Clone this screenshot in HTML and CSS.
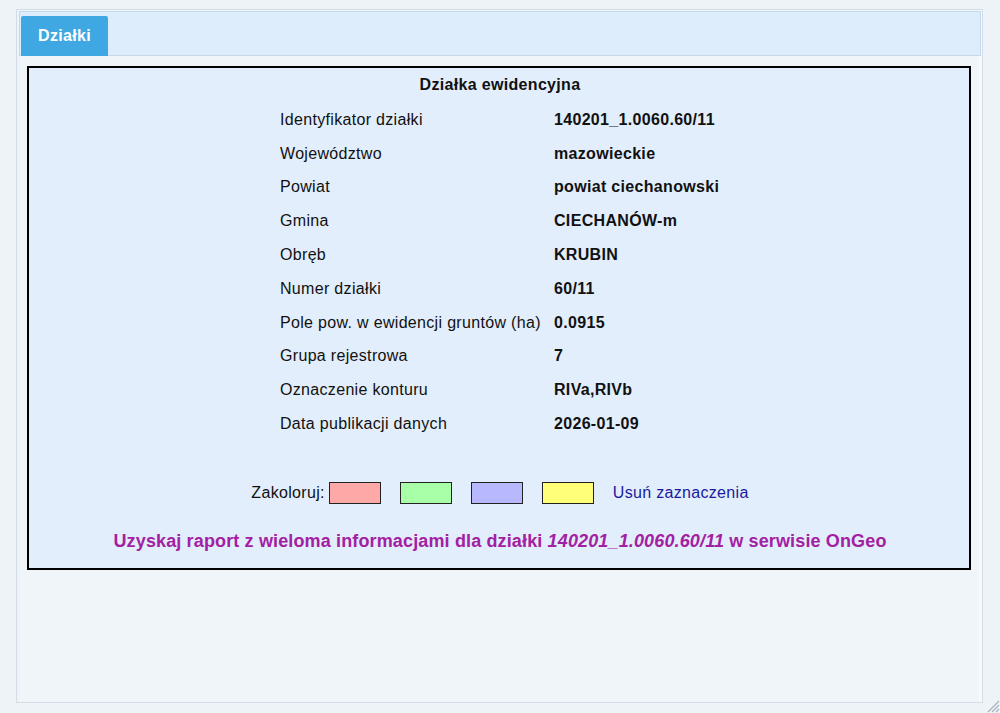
FILE: index.html
```html
<!DOCTYPE html>
<html lang="pl">
<head>
<meta charset="utf-8">
<title>Działki</title>
<link rel="stylesheet" href="styles.css">
</head>
<body>
<div class="panel">
  <div class="tabbar">
    <div class="tab">Działki</div>
  </div>
  <div class="content">
    <div class="box">
      <div class="title">Działka ewidencyjna</div>
      <div class="grid">
        <div class="lab">Identyfikator działki</div><div class="val">140201_1.0060.60/11</div>
        <div class="lab">Województwo</div><div class="val">mazowieckie</div>
        <div class="lab">Powiat</div><div class="val">powiat ciechanowski</div>
        <div class="lab">Gmina</div><div class="val">CIECHANÓW-m</div>
        <div class="lab">Obręb</div><div class="val">KRUBIN</div>
        <div class="lab">Numer działki</div><div class="val">60/11</div>
        <div class="lab">Pole pow. w ewidencji gruntów (ha)</div><div class="val">0.0915</div>
        <div class="lab">Grupa rejestrowa</div><div class="val">7</div>
        <div class="lab">Oznaczenie konturu</div><div class="val">RIVa,RIVb</div>
        <div class="lab">Data publikacji danych</div><div class="val">2026-01-09</div>
      </div>
      <div class="colors">
        <span class="clabel">Zakoloruj:</span>
        <span class="sw red"></span>
        <span class="sw green"></span>
        <span class="sw blue"></span>
        <span class="sw yellow"></span>
        <a class="clear">Usuń zaznaczenia</a>
      </div>
      <div class="report">Uzyskaj raport z wieloma informacjami dla działki <i>140201_1.0060.60/11</i> w serwisie OnGeo</div>
    </div>
  </div>
</div>
<svg class="grip" width="16" height="16" viewBox="0 0 16 16">
  <path d="M15 4 L4 15 M15 8 L8 15 M15 12 L12 15" stroke="#a9b4bf" stroke-width="1.3" fill="none"/>
</svg>
</body>
</html>
```
FILE: styles.css
```css
html, body {
  margin: 0;
  padding: 0;
  background: #eef3f8;
  font-family: "Liberation Sans", Arial, sans-serif;
  font-size: 16px;
  color: #111;
}
body {
  padding: 9px 0 0 16px;
  height: 713px;
  box-sizing: border-box;
  overflow: hidden;
}
.panel {
  width: 967px;
  height: 694px;
  box-sizing: border-box;
  border: 1px solid #d3dde7;
  background: #f0f5f9;
  padding: 1px 1px 0 2px;
  box-shadow: inset 3px 0 0 #eef3f8, inset -3px 0 0 #f7fafc;
}
.tabbar {
  height: 45px;
  box-sizing: border-box;
  border: 1px solid #c5d9ea;
  background: #deedfb;
  padding: 4px 0 0 1px;
  display: flex;
  align-items: flex-end;
}
.tab {
  width: 87px;
  height: 40px;
  box-sizing: border-box;
  margin-bottom: -1px;
  background: #3fa8e2;
  color: #fff;
  font-weight: bold;
  font-size: 16px;
  letter-spacing: 0.3px;
  display: flex;
  align-items: center;
  justify-content: center;
  border-radius: 2px 2px 0 0;
}
.content {
  padding: 10px 10px 0 8px;
}
.box {
  width: 944px;
  height: 504px;
  box-sizing: border-box;
  border: 2px solid #000;
  background: #e2eefc;
  padding-top: 7px;
  letter-spacing: 0.32px;
}
.title {
  text-align: center;
  font-weight: bold;
  line-height: 20px;
  margin-bottom: 8px;
  padding-left: 2px;
}
.grid {
  display: grid;
  grid-template-columns: 274px 170px;
  grid-auto-rows: 33.8px;
  justify-content: center;
  align-items: center;
  padding-left: 0;
}
.lab {
  padding-left: 3px;
  white-space: nowrap;
}
.val {
  font-weight: bold;
  padding-left: 3px;
  white-space: nowrap;
}
.colors {
  margin-top: 40px;
  display: flex;
  align-items: center;
  justify-content: center;
  height: 24px;
  padding-left: 2px;
}
.clabel {
  margin-right: 4px;
}
.sw {
  display: inline-block;
  width: 52px;
  height: 22px;
  box-sizing: border-box;
  border: 1px solid #222;
  margin-right: 19px;
}
.red { background: #ffa8a8; }
.green { background: #a8ffa8; }
.blue { background: #b8b8ff; }
.yellow { background: #ffff78; }
.clear {
  color: #1a1aa0;
  cursor: pointer;
}
.report {
  margin-top: 25px;
  text-align: center;
  font-weight: bold;
  font-size: 18px;
  letter-spacing: 0.14px;
  color: #a320a3;
  line-height: 22px;
  padding-left: 2px;
}
.grip {
  position: absolute;
  right: 0;
  bottom: 0;
}
```
